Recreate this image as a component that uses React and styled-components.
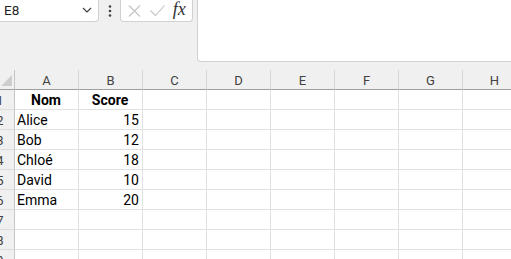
import React from "react";
import styled, { createGlobalStyle } from "styled-components";

const GlobalStyle = createGlobalStyle`
  body {
    margin: 0;
    background: #ffffff;
    font-family: Roboto, "Open Sans", sans-serif;
    overflow: hidden;
  }
`;

const Page = styled.div`
  width: 511px;
  height: 259px;
  overflow: hidden;
`;

const Toolbar = styled.div`
  display: flex;
  align-items: flex-start;
  height: 70px;
  background: #f0f0f0;
`;

const NameBox = styled.div`
  box-sizing: border-box;
  width: 99px;
  height: 22px;
  display: flex;
  align-items: center;
  justify-content: space-between;
  padding: 0 6px 1px 4px;
  background: #fff;
  border: 1px solid #d1d1d1;
  border-top: none;
  border-left: none;
  border-radius: 0 0 4px 0;
  font-size: 13.5px;
  color: #1f1f1f;
`;

const Dots = styled.div`
  width: 21px;
  height: 22px;
  display: flex;
  align-items: center;
  justify-content: center;
`;

const FxBox = styled.div`
  box-sizing: border-box;
  width: 73px;
  height: 22px;
  display: flex;
  align-items: center;
  padding: 0 3px;
  background: #fff;
  border: 1px solid #d1d1d1;
  border-top: none;
  border-radius: 0 0 4px 4px;
`;

const FxButton = styled.div`
  width: ${p => p.$w}px;
  height: 20px;
  display: flex;
  align-items: center;
  justify-content: center;
`;

const FxLabel = styled.span`
  font-family: "Liberation Serif", "DejaVu Serif", serif;
  font-style: italic;
  font-size: 18px;
  color: #333;
  line-height: 1;
  margin-top: -3px;
`;

const FormulaBar = styled.div`
  box-sizing: border-box;
  flex: 1;
  height: 62px;
  margin-left: 4px;
  background: #fff;
  border: 1px solid #d1d1d1;
  border-top: none;
  border-right: none;
  border-radius: 0 0 0 4px;
`;

const Grid = styled.div`
  display: grid;
  grid-template-columns: 15px repeat(8, 64px);
  grid-auto-rows: 20px;
  width: 600px;
`;

const ColHead = styled.div`
  box-sizing: border-box;
  display: flex;
  align-items: center;
  justify-content: center;
  padding-top: 2px;
  background: #f0f0f0;
  border-bottom: 1px solid #a0a0a0;
  border-right: 1px solid #d6d6d6;
  font-size: 13px;
  color: #424242;
`;

const Corner = styled.div`
  box-sizing: border-box;
  background: #f0f0f0;
  border-bottom: 1px solid #a0a0a0;
  border-right: 1px solid #c6c6c6;
  display: flex;
  align-items: flex-end;
  justify-content: flex-end;
  padding: 0 2px 3px 0;
`;

const RowHead = styled.div`
  box-sizing: border-box;
  overflow: hidden;
  display: flex;
  justify-content: flex-end;
  align-items: center;
  background: #f0f0f0;
  border-right: 1px solid #c6c6c6;
  border-bottom: 1px solid #dcdcdc;
`;

const RowNum = styled.span`
  flex: none;
  width: 28px;
  text-align: center;
  font-size: 13px;
  color: #424242;
  padding-top: 1px;
`;

const Cell = styled.div`
  box-sizing: border-box;
  display: flex;
  align-items: flex-end;
  justify-content: ${p => (p.$align === "right" ? "flex-end" : p.$align === "center" ? "center" : "flex-start")};
  padding: 0 3px 0 2px;
  border-right: 1px solid #e1e1e1;
  border-bottom: 1px solid #e1e1e1;
  font-size: 14px;
  line-height: 18px;
  font-weight: ${p => (p.$bold ? 700 : 400)};
  color: #000;
  white-space: nowrap;
`;

const columns = ["A", "B", "C", "D", "E", "F", "G", "H"];

const rows = [
  [{ v: "Nom", bold: true, align: "center" }, { v: "Score", bold: true, align: "center" }],
  [{ v: "Alice" }, { v: "15", align: "right" }],
  [{ v: "Bob" }, { v: "12", align: "right" }],
  [{ v: "Chloé" }, { v: "18", align: "right" }],
  [{ v: "David" }, { v: "10", align: "right" }],
  [{ v: "Emma" }, { v: "20", align: "right" }],
  [],
  [],
  [],
];

const Chevron = () => (
  <svg width="10" height="6" viewBox="0 0 10 6">
    <path d="M1 1l4 4 4-4" fill="none" stroke="#424242" strokeWidth="1.2" />
  </svg>
);

const App = () => {
  return (
    <Page>
      <GlobalStyle />
      <Toolbar>
        <NameBox>
          <span>E8</span>
          <Chevron />
        </NameBox>
        <Dots>
          <svg width="4" height="12" viewBox="0 0 4 12">
            <circle cx="2" cy="1.5" r="1.3" fill="#424242" />
            <circle cx="2" cy="6" r="1.3" fill="#424242" />
            <circle cx="2" cy="10.5" r="1.3" fill="#424242" />
          </svg>
        </Dots>
        <FxBox>
          <FxButton $w={22}>
            <svg width="13" height="12" viewBox="0 0 13 12">
              <path d="M1 0.5l11 11M12 0.5l-11 11" stroke="#c4c4c4" strokeWidth="1.1" fill="none" />
            </svg>
          </FxButton>
          <FxButton $w={24}>
            <svg width="15" height="11" viewBox="0 0 15 11">
              <path d="M0.5 5.5l5 5 9-10" stroke="#c4c4c4" strokeWidth="1.1" fill="none" />
            </svg>
          </FxButton>
          <FxButton $w={20}>
            <FxLabel>fx</FxLabel>
          </FxButton>
        </FxBox>
        <FormulaBar />
      </Toolbar>
      <Grid>
        <Corner>
          <svg width="11" height="11" viewBox="0 0 11 11">
            <path d="M11 0L11 11L0 11Z" fill="#cdcdcd" />
          </svg>
        </Corner>
        {columns.map(c => (
          <ColHead key={c}>{c}</ColHead>
        ))}
        {rows.map((r, i) => (
          <React.Fragment key={i}>
            <RowHead>
              <RowNum>{i + 1}</RowNum>
            </RowHead>
            {columns.map((c, j) => {
              const cell = r[j] || {};
              return (
                <Cell key={c} $bold={cell.bold} $align={cell.align}>
                  {cell.v}
                </Cell>
              );
            })}
          </React.Fragment>
        ))}
      </Grid>
    </Page>
  );
};

export default App;
